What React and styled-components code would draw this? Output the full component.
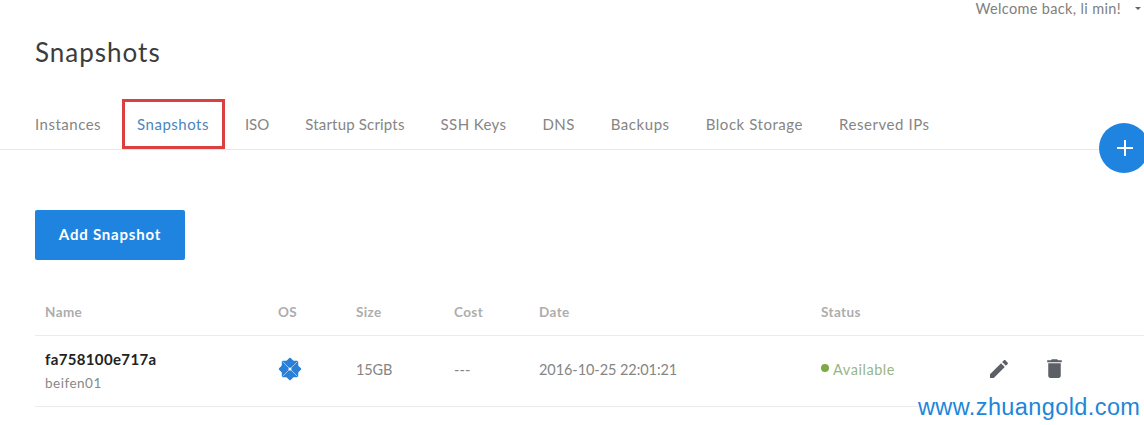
import React from 'react';
import styled, { createGlobalStyle } from 'styled-components';

const GlobalStyle = createGlobalStyle`
  html, body {
    margin: 0;
    padding: 0;
    background: #fff;
    font-family: "Lato", "Open Sans", sans-serif;
  }
`;

const Page = styled.div`
  position: relative;
  width: 1144px;
  height: 425px;
  overflow: hidden;
  background: #fff;
`;

const TopBar = styled.div`
  display: flex;
  justify-content: flex-end;
  align-items: center;
  height: 16px;
  padding-right: 3px;
  font-size: 14.5px;
  letter-spacing: 0.35px;
  color: #808080;
`;

const Caret = styled.span`
  width: 0;
  height: 0;
  margin-left: 14px;
  border-left: 3px solid transparent;
  border-right: 3px solid transparent;
  border-top: 3px solid #666;
`;

const Title = styled.h1`
  margin: 0;
  padding: 21px 0 0 35px;
  height: 62px;
  font-size: 26px;
  line-height: 30px;
  font-weight: 400;
  letter-spacing: 1px;
  color: #3c3c3c;
`;

const Tabs = styled.nav`
  display: flex;
  height: 50px;
  padding-left: 17px;
  border-bottom: 1px solid #e8e8e8;
`;

const Tab = styled.a`
  position: relative;
  display: flex;
  align-items: center;
  padding: 0 18px;
  font-size: 15px;
  letter-spacing: ${(p) => p.$spacing ?? 0.4}px;
  color: ${(p) => (p.$active ? '#4a86bd' : '#858585')};
  white-space: nowrap;

  ${(p) =>
    p.$active &&
    `
    &::after {
      content: '';
      position: absolute;
      inset: 0 2px 0 3px;
      border: 3px solid #d9403f;
    }
  `}
`;

const Fab = styled.div`
  position: absolute;
  left: 1099px;
  top: 123px;
  width: 50px;
  height: 50px;
  padding-left: 1px;
  box-sizing: border-box;
  border-radius: 50%;
  background: #1e84e0;
  display: flex;
  align-items: center;
  justify-content: center;
`;

const Content = styled.div`
  padding: 60px 0 0 35px;
`;

const AddButton = styled.button`
  display: block;
  width: 150px;
  height: 50px;
  padding: 0 0 2px;
  border: 0;
  border-radius: 2px;
  background: #1e84e0;
  color: #fff;
  font-family: inherit;
  font-size: 15px;
  font-weight: 700;
  letter-spacing: 0.8px;
`;

const columns = '243px 78px 98px 85px 282px 166px 1fr';

const HeadRow = styled.div`
  display: grid;
  grid-template-columns: ${columns};
  align-items: center;
  height: 75px;
  border-bottom: 1px solid #ebebeb;
`;

const HeadCell = styled.div`
  padding: 29px 0 0 ${(p) => (p.$first ? 10 : 0)}px;
  font-size: 13.5px;
  font-weight: 700;
  letter-spacing: 0.4px;
  color: #adadad;
`;

const BodyRow = styled.div`
  display: grid;
  grid-template-columns: ${columns};
  align-items: center;
  height: 70px;
  border-bottom: 1px solid #ebebeb;
`;

const Cell = styled.div`
  padding-bottom: 4px;
  font-size: 14.5px;
  letter-spacing: ${(p) => p.$spacing ?? 0.1}px;
  color: #858585;
  white-space: nowrap;
`;

const NameCell = styled.div`
  padding: 0 0 1px 10px;
  white-space: nowrap;
`;

const SnapName = styled.div`
  font-size: 15px;
  font-weight: 700;
  line-height: 20px;
  letter-spacing: 0.35px;
  color: #222;
`;

const SnapLabel = styled.div`
  margin-top: 5px;
  font-size: 13.5px;
  line-height: 18px;
  letter-spacing: 0.5px;
  color: #888;
`;

const OsIcon = styled.svg`
  display: block;
  width: 24px;
  height: 24px;
`;

const Status = styled(Cell)`
  display: flex;
  align-items: center;
  gap: 4px;
  letter-spacing: 0.55px;
  color: #98b685;
`;

const StatusDot = styled.span`
  width: 8px;
  height: 8px;
  margin-bottom: 2px;
  border-radius: 50%;
  background: #7cab45;
`;

const Actions = styled.div`
  display: flex;
  align-items: center;
  gap: 31px;
  padding-bottom: 5px;
`;

const ActionIcon = styled.svg`
  display: block;
  width: ${(p) => p.$size}px;
  height: ${(p) => p.$size}px;
  fill: #5c5f66;
`;

const Watermark = styled.div`
  position: absolute;
  right: 0;
  top: 392px;
  width: 226px;
  font-family: "Liberation Sans", Arial, sans-serif;
  font-size: 23.5px;
  line-height: 30px;
  letter-spacing: 0.4px;
  color: #1c86da;
  background: #fff;
  white-space: nowrap;
`;

const tabs = [
  { label: 'Instances', spacing: 0.5 },
  { label: 'Snapshots', active: true, spacing: 0.5 },
  { label: 'ISO', spacing: 0 },
  { label: 'Startup Scripts', spacing: 0.18 },
  { label: 'SSH Keys', spacing: 0.4 },
  { label: 'DNS', spacing: 0.4 },
  { label: 'Backups', spacing: 0.55 },
  { label: 'Block Storage', spacing: 0.55 },
  { label: 'Reserved IPs', spacing: 0.55 },
];

function OsLogo() {
  return (
    <OsIcon viewBox="0 0 24 24">
      <g fill="#2a7fd6">
        <rect x="3.8" y="3.8" width="16.4" height="16.4" rx="1" />
        <rect x="3.8" y="3.8" width="16.4" height="16.4" rx="1" transform="rotate(45 12 12)" />
      </g>
      <g stroke="#cfe3f7" strokeWidth="0.7" fill="none">
        <path d="M12 12L4.5 4.5M12 12L19.5 4.5M12 12L4.5 19.5M12 12L19.5 19.5" />
      </g>
      <circle cx="12" cy="12" r="1.6" fill="#fff" />
    </OsIcon>
  );
}

export default function App() {
  return (
    <Page>
      <GlobalStyle />
      <TopBar>
        Welcome back, li min!
        <Caret />
      </TopBar>
      <Title>Snapshots</Title>
      <Tabs>
        {tabs.map((t) => (
          <Tab key={t.label} $active={t.active} $spacing={t.spacing}>
            {t.label}
          </Tab>
        ))}
      </Tabs>
      <Fab>
        <svg width="18" height="18" viewBox="0 0 18 18">
          <path d="M9 1v16M1 9h16" stroke="#fff" strokeWidth="2" />
        </svg>
      </Fab>
      <Content>
        <AddButton>Add Snapshot</AddButton>
        <HeadRow>
          <HeadCell $first>Name</HeadCell>
          <HeadCell>OS</HeadCell>
          <HeadCell>Size</HeadCell>
          <HeadCell>Cost</HeadCell>
          <HeadCell>Date</HeadCell>
          <HeadCell>Status</HeadCell>
          <HeadCell />
        </HeadRow>
        <BodyRow>
          <NameCell>
            <SnapName>fa758100e717a</SnapName>
            <SnapLabel>beifen01</SnapLabel>
          </NameCell>
          <Cell><OsLogo /></Cell>
          <Cell $spacing={-0.1}>15GB</Cell>
          <Cell>---</Cell>
          <Cell $spacing={-0.07}>2016-10-25 22:01:21</Cell>
          <Status><StatusDot />Available</Status>
          <Actions>
            <ActionIcon $size={24} viewBox="0 0 24 24">
              <path d="M3 17.25V21h3.75L17.81 9.94l-3.75-3.75L3 17.25zM20.71 7.04c.39-.39.39-1.02 0-1.41l-2.34-2.34c-.39-.39-1.02-.39-1.41 0l-1.83 1.83 3.75 3.75 1.83-1.83z" />
            </ActionIcon>
            <ActionIcon $size={25} viewBox="0 0 24 24">
              <path d="M6 19c0 1.1.9 2 2 2h8c1.1 0 2-.9 2-2V7H6v12zM19 4h-3.5l-1-1h-5l-1 1H5v2h14V4z" />
            </ActionIcon>
          </Actions>
        </BodyRow>
      </Content>
      <Watermark>www.zhuangold.com</Watermark>
    </Page>
  );
}
